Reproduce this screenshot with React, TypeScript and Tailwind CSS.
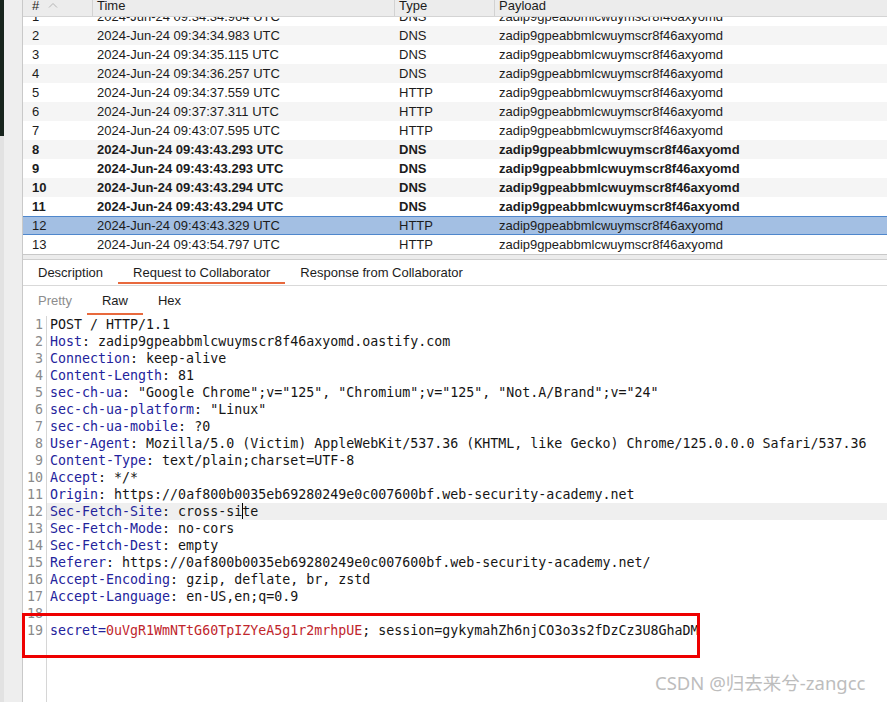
import React from "react";

type Row = { n: number; time: string; type: string; bold?: boolean; sel?: boolean };

const rows: Row[] = [
  { n: 1, time: "2024-Jun-24 09:34:34.964 UTC", type: "DNS" },
  { n: 2, time: "2024-Jun-24 09:34:34.983 UTC", type: "DNS" },
  { n: 3, time: "2024-Jun-24 09:34:35.115 UTC", type: "DNS" },
  { n: 4, time: "2024-Jun-24 09:34:36.257 UTC", type: "DNS" },
  { n: 5, time: "2024-Jun-24 09:34:37.559 UTC", type: "HTTP" },
  { n: 6, time: "2024-Jun-24 09:37:37.311 UTC", type: "HTTP" },
  { n: 7, time: "2024-Jun-24 09:43:07.595 UTC", type: "HTTP" },
  { n: 8, time: "2024-Jun-24 09:43:43.293 UTC", type: "DNS", bold: true },
  { n: 9, time: "2024-Jun-24 09:43:43.293 UTC", type: "DNS", bold: true },
  { n: 10, time: "2024-Jun-24 09:43:43.294 UTC", type: "DNS", bold: true },
  { n: 11, time: "2024-Jun-24 09:43:43.294 UTC", type: "DNS", bold: true },
  { n: 12, time: "2024-Jun-24 09:43:43.329 UTC", type: "HTTP", sel: true },
  { n: 13, time: "2024-Jun-24 09:43:54.797 UTC", type: "HTTP" },
];

const headers: [string, string][] = [
  ["Host", "zadip9gpeabbmlcwuymscr8f46axyomd.oastify.com"],
  ["Connection", "keep-alive"],
  ["Content-Length", "81"],
  ["sec-ch-ua", '"Google Chrome";v="125", "Chromium";v="125", "Not.A/Brand";v="24"'],
  ["sec-ch-ua-platform", '"Linux"'],
  ["sec-ch-ua-mobile", "?0"],
  ["User-Agent", "Mozilla/5.0 (Victim) AppleWebKit/537.36 (KHTML, like Gecko) Chrome/125.0.0.0 Safari/537.36"],
  ["Content-Type", "text/plain;charset=UTF-8"],
  ["Accept", "*/*"],
  ["Origin", "https://0af800b0035eb69280249e0c007600bf.web-security-academy.net"],
  ["Sec-Fetch-Site", "cross-site"],
  ["Sec-Fetch-Mode", "no-cors"],
  ["Sec-Fetch-Dest", "empty"],
  ["Referer", "https://0af800b0035eb69280249e0c007600bf.web-security-academy.net/"],
  ["Accept-Encoding", "gzip, deflate, br, zstd"],
  ["Accept-Language", "en-US,en;q=0.9"],
];

const KEY = "text-[#23239c]";

function CodeLine({ n, children, hl }: { n: number; children?: React.ReactNode; hl?: boolean }) {
  return (
    <div className="flex h-[17px] leading-[17px]">
      <div className="w-[24px] shrink-0 text-right pr-[3px] text-[#8a8a8a] border-r border-[#d6d6d6] bg-white">{n}</div>
      <div className={`flex-1 pl-[3px] whitespace-pre ${hl ? "bg-[#efefef]" : ""}`}>{children}</div>
    </div>
  );
}

export default function App() {
  return (
    <div
      className="w-[887px] h-[702px] flex bg-white overflow-hidden relative text-[#1c1c1c]"
      style={{ fontFamily: '"Liberation Sans", Arial, sans-serif' }}
    >
      {/* left strip */}
      <div className="w-[23px] shrink-0 bg-[#eeeeee] flex border-r border-[#c9c9c9]">
        <div className="w-[4px] flex flex-col">
          <div className="h-[136px] bg-[#17241d]" />
          <div className="flex-1 bg-[#e2e2e2]" />
        </div>
      </div>

      <div className="flex-1 flex flex-col min-w-0">
        {/* table */}
        <div className="h-[254px] flex flex-col overflow-hidden shrink-0">
          <div className="h-[17px] shrink-0 flex bg-[#ececec] border-b border-[#d4d4d4] text-[13px] leading-[12px] relative z-10">
            <div className="w-[70px] shrink-0 pl-[9px] border-r border-[#d2d2d2] flex items-start gap-[9px]">
              <span>#</span>
              <svg width="10" height="6" viewBox="0 0 10 6" className="mt-[2px]">
                <path d="M1 5.5 L5 1.5 L9 5.5" fill="none" stroke="#b4b4b4" strokeWidth="1" />
              </svg>
            </div>
            <div className="w-[302px] shrink-0 pl-[4px] border-r border-[#d2d2d2]">Time</div>
            <div className="w-[100px] shrink-0 pl-[4px] border-r border-[#d2d2d2]">Type</div>
            <div className="flex-1 pl-[4px]">Payload</div>
          </div>
          <div className="flex-1 overflow-hidden">
            <div className="mt-[-10px]">
              {rows.map((r) => (
                <div
                  key={r.n}
                  className={`h-[19px] flex items-center text-[13px] ${r.bold ? "font-bold" : ""} ${
                    r.sel
                      ? "bg-[#a3bfe3] border-y border-[#4f87cc]"
                      : r.n % 2 === 0
                      ? "bg-[#f5f5f5]"
                      : "bg-white"
                  }`}
                >
                  <div className="w-[70px] shrink-0 pl-[9px]">{r.n}</div>
                  <div className="w-[302px] shrink-0 pl-[4px]">{r.time}</div>
                  <div className="w-[100px] shrink-0 pl-[4px]">{r.type}</div>
                  <div className="flex-1 pl-[4px]">zadip9gpeabbmlcwuymscr8f46axyomd</div>
                </div>
              ))}
            </div>
          </div>
        </div>

        {/* splitter */}
        <div className="h-[5px] shrink-0 bg-[#ececec] border-t border-[#c8c8c8]" />

        {/* bottom panel */}
        <div className="flex-1 flex flex-col border-t border-[#cfcfcf] bg-white min-h-0">
          <div className="h-[26px] shrink-0 flex text-[13px] border-b border-[#d9d9d9]">
            <div className="px-[15px] flex items-center">Description</div>
            <div className="px-[15px] flex items-center relative">
              Request to Collaborator
              <div className="absolute left-0 right-0 bottom-[1px] h-[2px] bg-[#e8693d]" />
            </div>
            <div className="px-[15px] flex items-center">Response from Collaborator</div>
          </div>
          <div className="h-[30px] shrink-0 flex text-[13px]">
            <div className="px-[15px] flex items-center text-[#8d8d8d]">Pretty</div>
            <div className="px-[15px] flex items-center relative">
              Raw
              <div className="absolute left-0 right-0 bottom-[1px] h-[2px] bg-[#e8693d]" />
            </div>
            <div className="px-[15px] flex items-center">Hex</div>
          </div>
          <div
            className="flex-1 flex flex-col text-[13.3px] text-[#151515]"
            style={{ fontFamily: '"DejaVu Sans Mono", "Liberation Mono", monospace' }}
          >
            <CodeLine n={1}>POST / HTTP/1.1</CodeLine>
            {headers.map(([k, v], i) => (
              <CodeLine key={k} n={i + 2} hl={i + 2 === 12}>
                <span className={KEY}>{k}</span>:{" "}
                {k === "Sec-Fetch-Site" ? (
                  <>
                    cross-si
                    <span className="relative">
                      <span className="absolute left-0 top-[-1px] w-[1px] h-[16px] bg-black" />
                    </span>
                    te
                  </>
                ) : (
                  v
                )}
              </CodeLine>
            ))}
            <CodeLine n={18} />
            <CodeLine n={19}>
              <span className={KEY}>secret</span>
              <span className={KEY}>=</span>
              <span className="text-[#c0262c]">0uVgR1WmNTtG60TpIZYeA5g1r2mrhpUE</span>
              ; session=gykymahZh6njCO3o3s2fDzCz3U8GhaDM
            </CodeLine>
            <div className="flex-1 flex">
              <div className="w-[24px] shrink-0 border-r border-[#d6d6d6]" />
            </div>
          </div>
        </div>
      </div>

      {/* annotation box */}
      <div className="absolute left-[22px] top-[613px] w-[678px] h-[45px] border-[3px] border-[#ee0000]" />

      {/* watermark */}
      <div
        className="absolute left-[655px] top-[671px] text-[18.5px] text-[#bdbdbd] leading-[24px] whitespace-nowrap"
        style={{ fontFamily: '"Noto Sans", "Noto Sans CJK SC", sans-serif' }}
      >
        CSDN @归去来兮-zangcc
      </div>
    </div>
  );
}
